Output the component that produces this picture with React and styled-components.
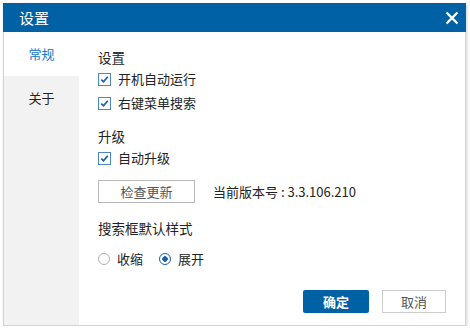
import React, { useState } from "react";
import styled, { createGlobalStyle } from "styled-components";

const GlobalStyle = createGlobalStyle`
  body {
    margin: 0;
    background: #ffffff;
    font-family: "Noto Sans CJK SC", "Noto Sans", sans-serif;
  }
`;

export default function App() {
  const [autoRun, setAutoRun] = useState(true);
  const [menuSearch, setMenuSearch] = useState(true);
  const [autoUpdate, setAutoUpdate] = useState(true);
  const [mode, setMode] = useState("expand");

  return (
    <>
      <GlobalStyle />
      <StyledWindow>
        <StyledTitleBar>
          <span>设置</span>
          <StyledClose aria-label="close">
            <svg width="14" height="14" viewBox="0 0 14 14">
              <path d="M1.5 1.5 L12.5 12.5 M12.5 1.5 L1.5 12.5" stroke="#fff" strokeWidth="2.4" />
            </svg>
          </StyledClose>
        </StyledTitleBar>
        <StyledBody>
          <StyledSidebar>
            <StyledTab $active>常规</StyledTab>
            <StyledTab>关于</StyledTab>
          </StyledSidebar>
          <StyledContent>
            <StyledHeading>设置</StyledHeading>
            <Check checked={autoRun} onChange={setAutoRun} label="开机自动运行" />
            <Check checked={menuSearch} onChange={setMenuSearch} label="右键菜单搜索" />
            <StyledHeading $top={12}>升级</StyledHeading>
            <Check checked={autoUpdate} onChange={setAutoUpdate} label="自动升级" />
            <StyledUpdateRow>
              <StyledGrayButton>检查更新</StyledGrayButton>
              <span>当前版本号 : 3.3.106.210</span>
            </StyledUpdateRow>
            <StyledHeading $top={16}>搜索框默认样式</StyledHeading>
            <StyledRadioRow>
              <Radio checked={mode === "fold"} onClick={() => setMode("fold")} label="收缩" />
              <Radio checked={mode === "expand"} onClick={() => setMode("expand")} label="展开" />
            </StyledRadioRow>
            <StyledFooter>
              <StyledPrimaryButton>确定</StyledPrimaryButton>
              <StyledCancelButton>取消</StyledCancelButton>
            </StyledFooter>
          </StyledContent>
        </StyledBody>
      </StyledWindow>
    </>
  );
}

function Check({ checked, onChange, label }) {
  return (
    <StyledCheckRow onClick={() => onChange(!checked)}>
      <StyledBox>
        {checked && (
          <svg width="9" height="9" viewBox="0 0 9 9">
            <path d="M1.3 4.6 L3.5 6.8 L7.8 1.8" stroke="#1b5fa8" strokeWidth="1.7" fill="none" />
          </svg>
        )}
      </StyledBox>
      {label}
    </StyledCheckRow>
  );
}

function Radio({ checked, onClick, label }) {
  return (
    <StyledRadio onClick={onClick}>
      <StyledDot $checked={checked} />
      {label}
    </StyledRadio>
  );
}

const StyledWindow = styled.div`
  margin: 3px 0 0 3px;
  width: 463px;
  height: 323px;
  display: flex;
  flex-direction: column;
  border: 1px solid #d4d4d4;
  border-top: none;
  box-sizing: border-box;
  box-shadow: 1px 1px 3px rgba(0, 0, 0, 0.18);
  background: #ffffff;
`;

const StyledTitleBar = styled.div`
  height: 29px;
  margin: 0 -1px;
  background: #0062a4;
  color: #ffffff;
  font-size: 15px;
  line-height: 29px;
  display: flex;
  align-items: center;
  justify-content: space-between;
  padding: 0 5px 0 16px;
`;

const StyledClose = styled.div`
  width: 18px;
  height: 18px;
  display: flex;
  align-items: center;
  justify-content: center;
`;

const StyledBody = styled.div`
  flex: 1;
  display: flex;
`;

const StyledSidebar = styled.div`
  width: 75px;
  background: #f2f2f2;
  display: flex;
  flex-direction: column;
`;

const StyledTab = styled.div`
  height: 44px;
  display: flex;
  align-items: center;
  justify-content: center;
  font-size: 13px;
  line-height: 18px;
  background: ${(p) => (p.$active ? "#ffffff" : "transparent")};
  color: ${(p) => (p.$active ? "#1477c8" : "#222222")};
`;

const StyledContent = styled.div`
  flex: 1;
  padding: 16px 18px 0 19px;
  font-size: 13px;
  line-height: 18px;
  color: #222222;
  display: flex;
  flex-direction: column;
`;

const StyledHeading = styled.div`
  font-size: 13.5px;
  line-height: 18px;
  height: 18px;
  margin-top: ${(p) => p.$top || 0}px;
  margin-bottom: 1px;
`;

const StyledCheckRow = styled.label`
  display: flex;
  align-items: center;
  gap: 7px;
  height: 24px;
  cursor: default;
`;

const StyledBox = styled.span`
  width: 11px;
  height: 11px;
  border: 1px solid #4d87c4;
  background: #ffffff;
  display: flex;
  align-items: center;
  justify-content: center;
`;

const StyledUpdateRow = styled.div`
  display: flex;
  align-items: center;
  gap: 18px;
  height: 23px;
  margin-top: 10px;
`;

const StyledGrayButton = styled.button`
  width: 97px;
  height: 23px;
  border: 1px solid #b9b9b9;
  background: #ffffff;
  color: #555555;
  font-family: inherit;
  font-size: 13px;
  line-height: 18px;
  padding: 0;
`;

const StyledRadioRow = styled.div`
  display: flex;
  gap: 16px;
  margin-top: 10px;
`;

const StyledRadio = styled.div`
  display: flex;
  align-items: center;
  gap: 7px;
  height: 22px;
`;

const StyledDot = styled.span`
  width: 10px;
  height: 10px;
  border-radius: 50%;
  border: 1px solid ${(p) => (p.$checked ? "#1b5fa8" : "#b0b0b0")};
  background: ${(p) => (p.$checked ? "radial-gradient(circle, #1b5fa8 0 2.5px, #fff 3px)" : "#ffffff")};
`;

const StyledFooter = styled.div`
  display: flex;
  justify-content: flex-end;
  gap: 13px;
  margin-top: auto;
  margin-bottom: 12px;
  margin-right: 1px;
`;

const StyledPrimaryButton = styled.button`
  width: 66px;
  height: 23px;
  border: none;
  border-radius: 2px;
  background: #0062a4;
  color: #ffffff;
  font-family: inherit;
  font-size: 13px;
  line-height: 18px;
  font-weight: bold;
  padding: 0;
`;

const StyledCancelButton = styled.button`
  width: 64px;
  height: 23px;
  border: 1px solid #cccccc;
  background: #ffffff;
  color: #555555;
  font-family: inherit;
  font-size: 13px;
  line-height: 18px;
  padding: 0;
`;
